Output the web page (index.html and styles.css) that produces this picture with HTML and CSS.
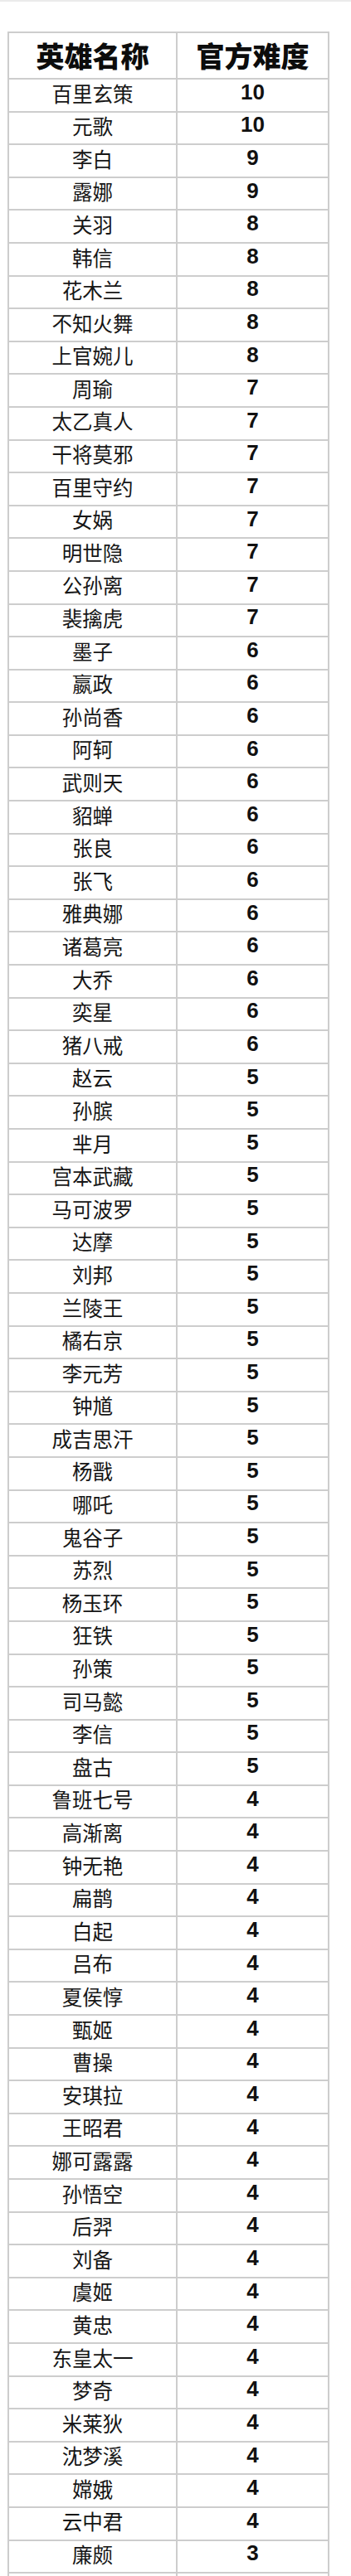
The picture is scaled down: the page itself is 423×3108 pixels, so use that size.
FILE: index.html
```html
<!DOCTYPE html>
<html lang="zh-CN">
<head>
<meta charset="utf-8">
<title>英雄难度</title>
<link rel="stylesheet" href="styles.css">
</head>
<body>
<div class="page">
  <div class="topbar"></div>
  <table class="heroes">
    <colgroup><col class="c-name"><col class="c-level"></colgroup>
    <thead>
      <tr><th>英雄名称</th><th>官方难度</th></tr>
    </thead>
    <tbody>
      <tr><td>百里玄策</td><td class="num">10</td></tr>
      <tr><td>元歌</td><td class="num">10</td></tr>
      <tr><td>李白</td><td class="num">9</td></tr>
      <tr><td>露娜</td><td class="num">9</td></tr>
      <tr><td>关羽</td><td class="num">8</td></tr>
      <tr><td>韩信</td><td class="num">8</td></tr>
      <tr><td>花木兰</td><td class="num">8</td></tr>
      <tr><td>不知火舞</td><td class="num">8</td></tr>
      <tr><td>上官婉儿</td><td class="num">8</td></tr>
      <tr><td>周瑜</td><td class="num">7</td></tr>
      <tr><td>太乙真人</td><td class="num">7</td></tr>
      <tr><td>干将莫邪</td><td class="num">7</td></tr>
      <tr><td>百里守约</td><td class="num">7</td></tr>
      <tr><td>女娲</td><td class="num">7</td></tr>
      <tr><td>明世隐</td><td class="num">7</td></tr>
      <tr><td>公孙离</td><td class="num">7</td></tr>
      <tr><td>裴擒虎</td><td class="num">7</td></tr>
      <tr><td>墨子</td><td class="num">6</td></tr>
      <tr><td>嬴政</td><td class="num">6</td></tr>
      <tr><td>孙尚香</td><td class="num">6</td></tr>
      <tr><td>阿轲</td><td class="num">6</td></tr>
      <tr><td>武则天</td><td class="num">6</td></tr>
      <tr><td>貂蝉</td><td class="num">6</td></tr>
      <tr><td>张良</td><td class="num">6</td></tr>
      <tr><td>张飞</td><td class="num">6</td></tr>
      <tr><td>雅典娜</td><td class="num">6</td></tr>
      <tr><td>诸葛亮</td><td class="num">6</td></tr>
      <tr><td>大乔</td><td class="num">6</td></tr>
      <tr><td>奕星</td><td class="num">6</td></tr>
      <tr><td>猪八戒</td><td class="num">6</td></tr>
      <tr><td>赵云</td><td class="num">5</td></tr>
      <tr><td>孙膑</td><td class="num">5</td></tr>
      <tr><td>芈月</td><td class="num">5</td></tr>
      <tr><td>宫本武藏</td><td class="num">5</td></tr>
      <tr><td>马可波罗</td><td class="num">5</td></tr>
      <tr><td>达摩</td><td class="num">5</td></tr>
      <tr><td>刘邦</td><td class="num">5</td></tr>
      <tr><td>兰陵王</td><td class="num">5</td></tr>
      <tr><td>橘右京</td><td class="num">5</td></tr>
      <tr><td>李元芳</td><td class="num">5</td></tr>
      <tr><td>钟馗</td><td class="num">5</td></tr>
      <tr><td>成吉思汗</td><td class="num">5</td></tr>
      <tr><td>杨戬</td><td class="num">5</td></tr>
      <tr><td>哪吒</td><td class="num">5</td></tr>
      <tr><td>鬼谷子</td><td class="num">5</td></tr>
      <tr><td>苏烈</td><td class="num">5</td></tr>
      <tr><td>杨玉环</td><td class="num">5</td></tr>
      <tr><td>狂铁</td><td class="num">5</td></tr>
      <tr><td>孙策</td><td class="num">5</td></tr>
      <tr><td>司马懿</td><td class="num">5</td></tr>
      <tr><td>李信</td><td class="num">5</td></tr>
      <tr><td>盘古</td><td class="num">5</td></tr>
      <tr><td>鲁班七号</td><td class="num">4</td></tr>
      <tr><td>高渐离</td><td class="num">4</td></tr>
      <tr><td>钟无艳</td><td class="num">4</td></tr>
      <tr><td>扁鹊</td><td class="num">4</td></tr>
      <tr><td>白起</td><td class="num">4</td></tr>
      <tr><td>吕布</td><td class="num">4</td></tr>
      <tr><td>夏侯惇</td><td class="num">4</td></tr>
      <tr><td>甄姬</td><td class="num">4</td></tr>
      <tr><td>曹操</td><td class="num">4</td></tr>
      <tr><td>安琪拉</td><td class="num">4</td></tr>
      <tr><td>王昭君</td><td class="num">4</td></tr>
      <tr><td>娜可露露</td><td class="num">4</td></tr>
      <tr><td>孙悟空</td><td class="num">4</td></tr>
      <tr><td>后羿</td><td class="num">4</td></tr>
      <tr><td>刘备</td><td class="num">4</td></tr>
      <tr><td>虞姬</td><td class="num">4</td></tr>
      <tr><td>黄忠</td><td class="num">4</td></tr>
      <tr><td>东皇太一</td><td class="num">4</td></tr>
      <tr><td>梦奇</td><td class="num">4</td></tr>
      <tr><td>米莱狄</td><td class="num">4</td></tr>
      <tr><td>沈梦溪</td><td class="num">4</td></tr>
      <tr><td>嫦娥</td><td class="num">4</td></tr>
      <tr><td>云中君</td><td class="num">4</td></tr>
      <tr><td>廉颇</td><td class="num">3</td></tr>
      <tr><td>&nbsp;</td><td class="num">&nbsp;</td></tr>
    </tbody>
  </table>
</div>
</body>
</html>
```

FILE: styles.css
```css
html, body {
  margin: 0;
  padding: 0;
  background: #fff;
}

.page {
  height: 3108px;
  overflow: hidden;
  background: #fff;
  font-family: "Noto Sans CJK SC", "Noto Sans", sans-serif;
  color: #161616;
}

.topbar {
  height: 2px;
  background: #ebebeb;
  margin-bottom: 36px;
}

.heroes {
  margin-left: 9px;
  border-collapse: collapse;
  table-layout: fixed;
  width: 386px;
}

.c-name { width: 203px; }
.c-level { width: 183px; }

.heroes th,
.heroes td {
  border: 2px solid #cdcdcd;
  padding: 0;
  text-align: center;
  vertical-align: middle;
  white-space: nowrap;
  overflow: hidden;
}

.heroes th {
  height: 54px;
  font-size: 34px;
  font-weight: 900;
  color: #0c0c0c;
  line-height: 1;
}

.heroes tbody tr {
  height: 39.6px;
}

.heroes td {
  font-size: 24.5px;
  font-weight: 400;
  line-height: 1;
  padding-bottom: 4px;
}

.heroes td.num {
  font-family: "Liberation Sans", Arial, sans-serif;
  font-weight: 700;
  font-size: 26px;
  color: #111;
  padding-bottom: 8px;
}
```
